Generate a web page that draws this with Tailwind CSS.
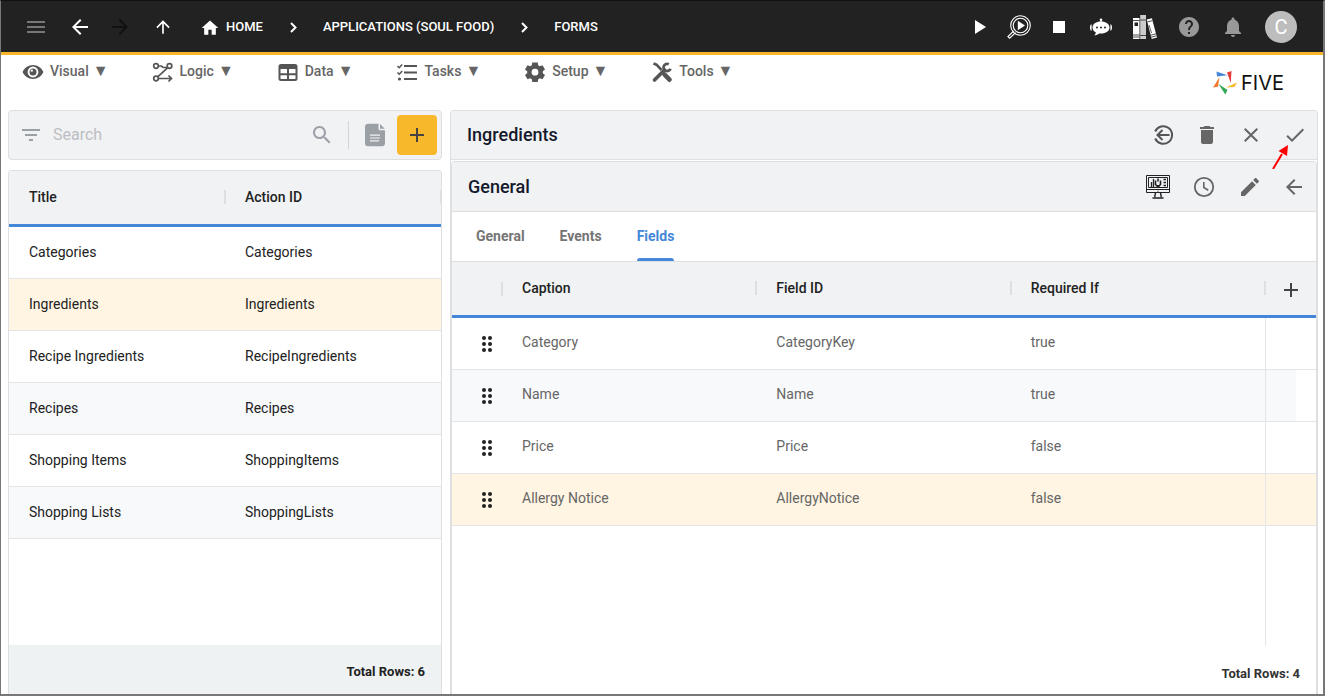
<!DOCTYPE html>
<html lang="en">
<head>
    <meta charset="UTF-8">
    <meta name="viewport" content="width=device-width, initial-scale=1.0">
    <script src="https://cdn.jsdelivr.net/npm/@tailwindcss/browser@4"></script>
    <title>Five - Forms</title>
</head>
<body class="h-screen flex flex-col overflow-hidden bg-white border-l border-t border-r-2 border-b-2 border-[#777] border-t-[#111] font-['Roboto',sans-serif] text-sm text-[#222]">

    <header class="h-[54px] shrink-0 flex items-center bg-[#222] border-b-3 border-[#fbb52b] text-white pl-[13px] pr-[26px]">
        <button aria-label="Menu" class="w-11 flex justify-center text-[#777]">
            <svg class="w-6 h-6" viewBox="0 0 24 24" fill="currentColor"><path d="M3 18h18v-2H3v2zm0-5h18v-2H3v2zm0-7v2h18V6H3z"/></svg>
        </button>
        <button aria-label="Back" class="w-11 flex justify-center">
            <svg class="w-6 h-6" viewBox="0 0 24 24" fill="currentColor"><path d="M20 11H7.83l5.59-5.59L12 4l-8 8 8 8 1.41-1.41L7.83 13H20v-2z"/></svg>
        </button>
        <button aria-label="Forward" class="w-9 flex justify-center text-[#111]">
            <svg class="w-6 h-6" viewBox="0 0 24 24" fill="currentColor"><path d="M12 4l-1.41 1.41L16.17 11H4v2h12.17l-5.58 5.59L12 20l8-8z"/></svg>
        </button>
        <button aria-label="Up" class="w-[50px] flex justify-center">
            <svg class="w-5 h-5" viewBox="0 0 24 24" fill="currentColor"><path d="M4 12l1.410 1.410L11 7.830V20h2V7.830l5.580 5.590L20 12l-8-8-8 8z"/></svg>
        </button>
        <nav class="flex items-center gap-[18px] ml-3 pt-0.5 text-[13px] font-medium">
            <a href="#" class="flex items-center gap-1.5">
                <svg class="w-5 h-5" viewBox="0 0 24 24" fill="currentColor"><path d="M10 20v-6h4v6h5v-8h3L12 3 2 12h3v8z"/></svg>
                HOME
            </a>
            <svg class="w-6 h-6" viewBox="0 0 24 24" fill="none" stroke="currentColor" stroke-width="2"><path d="M10 7l4.500 4.500-4.500 4.500"/></svg>
            <a href="#">APPLICATIONS (SOUL FOOD)</a>
            <svg class="w-6 h-6" viewBox="0 0 24 24" fill="none" stroke="currentColor" stroke-width="2"><path d="M10 7l4.500 4.500-4.500 4.500"/></svg>
            <a href="#">FORMS</a>
        </nav>

        <div class="flex items-center ml-auto">
            <button aria-label="Run" class="w-10 flex justify-center">
                <svg class="w-6 h-6" viewBox="0 0 24 24" fill="currentColor"><path d="M8 5v14l11-7z"/></svg>
            </button>
            <button aria-label="Inspect" class="w-10 flex justify-center">
                <svg class="w-6 h-6" viewBox="0 0 24 24" fill="none" stroke="currentColor">
                    <circle cx="13.500" cy="10.500" r="9.800" stroke-width="1.100"/>
                    <circle cx="13.500" cy="10.500" r="7.300" stroke-width="1.100"/>
                    <path d="M6.800 15.800L1 21.600l1.600 1.600 6-5.600" stroke-width="1.200"/>
                    <path d="M10.800 5.800v9.400l7.200-4.700z" fill="currentColor" stroke="none"/>
                </svg>
            </button>
            <button aria-label="Stop" class="w-10 flex justify-center">
                <svg class="w-6 h-6" viewBox="0 0 24 24" fill="currentColor"><path d="M6 6h12v12H6z"/></svg>
            </button>
            <button aria-label="Chat bot" class="w-11 flex justify-center">
                <svg class="w-6 h-6" viewBox="0 0 24 24" fill="currentColor">
                    <circle cx="12" cy="4.800" r="1.300"/>
                    <path d="M11.400 5h1.200v3h-1.200z"/>
                    <path d="M12 6.500c-5 0-8.500 2.500-8.500 6.100 0 2.200 1.300 3.900 3.400 5-.1 1-.7 1.900-1.600 2.700 2 0 3.700-.8 4.800-1.800.6.100 1.200.1 1.900.1 5 0 8.500-2.400 8.500-6s-3.500-6.100-8.500-6.100z"/>
                    <path d="M2.600 9.200v6.600C1.600 15.500 1 14.600 1 12.500s.6-3 1.600-3.300zM21.400 9.200v6.600c1-.3 1.600-1.200 1.600-3.300s-.6-3-1.600-3.300z"/>
                    <g fill="#222"><circle cx="8" cy="12.500" r="1"/><circle cx="12" cy="12.500" r="1"/><circle cx="16" cy="12.500" r="1"/></g>
                </svg>
            </button>
            <button aria-label="Library" class="w-11 flex justify-center">
                <svg class="w-6 h-6" viewBox="0 0 24 24">
                    <path fill="#fff" d="M0 3h6.500v21H0z"/>
                    <path fill="#ccc" d="M7.200 0H13v24H7.200z"/>
                    <path fill="#fff" d="M13.700 4.400l5.200-1.200L24 22.500 18.700 24z"/>
                    <g fill="none" stroke="#222">
                        <path d="M0 5.500h6.500M0 20h6.500M0 22h6.500M7.200 5h5.800M7.200 20.500h5.800M14.300 6.900l5.200-1.200M17.800 20.200l5.200-1.400M18.300 22.200l5.200-1.400" stroke-width=".8"/>
                        <path d="M16 10l2.600 8" stroke-width=".7"/>
                    </g>
                    <path fill="#222" d="M1.500 7.500h3.500v3.500H1.500z"/>
                </svg>
            </button>
            <button aria-label="Help" class="w-11 flex justify-center text-[#999]">
                <svg class="w-6 h-6" viewBox="0 0 24 24" fill="currentColor"><path d="M12 2C6.480 2 2 6.480 2 12s4.480 10 10 10 10-4.480 10-10S17.520 2 12 2zm1 17h-2v-2h2v2zm2.070-7.750l-.9.920C13.450 12.900 13 13.500 13 15h-2v-.5c0-1.100.450-2.100 1.170-2.830l1.240-1.260c.370-.360.590-.860.590-1.410 0-1.100-.9-2-2-2s-2 .9-2 2H8c0-2.210 1.790-4 4-4s4 1.790 4 4c0 .880-.360 1.680-.930 2.250z"/></svg>
            </button>
            <button aria-label="Notifications" class="w-11 flex justify-center text-[#999]">
                <svg class="w-6 h-6" viewBox="0 0 24 24" fill="currentColor"><path d="M12 22c1.100 0 2-.9 2-2h-4c0 1.100.890 2 2 2zm6-6v-5c0-3.070-1.640-5.640-4.500-6.320V4c0-.830-.670-1.500-1.500-1.500s-1.500.670-1.500 1.500v.680C7.630 5.360 6 7.920 6 11v5l-2 2v1h16v-1l-2-2z"/></svg>
            </button>
            <button aria-label="Account" class="w-8 h-8 ml-2.5 rounded-full bg-[#bdbdbd] text-xl leading-8">C</button>
        </div>
    </header>

    <div class="h-[55px] shrink-0 flex items-start justify-between pl-5 pr-[22px]">
        <nav class="flex gap-[42px] pt-[5px] font-medium text-[#666]">
            <button class="flex items-center gap-[5px]">
                <svg class="w-6 h-6" viewBox="0 0 24 24" fill="#555">
                    <path fill-rule="evenodd" d="M12 5C7.300 5 3.300 7.900 1.600 12c1.700 4.100 5.700 7 10.400 7s8.700-2.900 10.400-7C20.700 7.900 16.700 5 12 5zm0 12.400a5.400 5.400 0 110-10.800 5.400 5.400 0 010 10.800z"/>
                    <circle cx="12" cy="12" r="3.500"/>
                    <circle cx="10.800" cy="10.600" r="1.200" fill="#fff"/>
                </svg>
                <span class="flex items-center gap-1 h-5 mb-0.5">Visual <span class="text-base">▼</span></span>
            </button>
            <button class="flex items-center gap-[5px]">
                <svg class="w-6 h-6" viewBox="0 0 24 24" fill="none" stroke="#555" stroke-width="1.700">
                    <circle cx="5" cy="6" r="2.300"/>
                    <circle cx="18.500" cy="6" r="2.300"/>
                    <circle cx="5" cy="18.500" r="2.300"/>
                    <path d="M7.300 6h3l2 1.500M16.800 7.700L6.700 16.800M7.300 18.500h12.500M17.500 15.500l3 3-3 3M12.300 7.500h4"/>
                </svg>
                <span class="flex items-center gap-1 h-5 mb-0.5">Logic <span class="text-base">▼</span></span>
            </button>
            <button class="flex items-center gap-[5px]">
                <svg class="w-6 h-6" viewBox="0 0 24 24">
                    <rect x="3.500" y="5" width="17" height="15" rx="1.500" fill="none" stroke="#555" stroke-width="2"/>
                    <path d="M3 5h18v4H3z" fill="#555"/>
                    <path d="M12 8v12M3 14.200h18" stroke="#555" stroke-width="2"/>
                </svg>
                <span class="flex items-center gap-1 h-5 mb-0.5">Data <span class="text-base">▼</span></span>
            </button>
            <button class="flex items-center gap-[5px]">
                <svg class="w-6 h-6" viewBox="0 0 24 24" fill="none" stroke="#555" stroke-width="2">
                    <path d="M9 6h13M9 12.500h13M9 19h13"/>
                    <path d="M2.500 6l1.700 1.700L7.200 4.500M2.500 12.500l1.700 1.700L7.200 11" stroke-width="1.500"/>
                    <circle cx="4.500" cy="19" r="1.600" fill="#555" stroke="none"/>
                </svg>
                <span class="flex items-center gap-1 h-5 mb-0.5">Tasks <span class="text-base">▼</span></span>
            </button>
            <button class="flex items-center gap-[5px]">
                <svg class="w-6 h-6" viewBox="0 0 24 24" fill="#555">
                    <path fill-rule="evenodd" d="M9.300 2.500h5.400l.5 2.700 1.700 1 2.600-1 2.500 4.300-2.200 1.800v1.900l2.200 1.800-2.500 4.300-2.600-1-1.700 1-.5 2.700H9.300l-.5-2.700-1.700-1-2.600 1L2 15l2.200-1.800v-1.900L2 9.500l2.500-4.300 2.600 1 1.700-1zM12 8.800a3.400 3.400 0 100 6.800 3.400 3.400 0 000-6.800z"/>
                </svg>
                <span class="flex items-center gap-1 h-5 mb-0.5">Setup <span class="text-base">▼</span></span>
            </button>
            <button class="flex items-center gap-[5px]">
                <svg class="w-6 h-6" viewBox="0 0 24 24" fill="none" stroke="#555">
                    <path d="M4.500 20l10-10" stroke-width="3.600" stroke-linecap="round"/>
                    <path d="M18.800 4.200a3.600 3.600 0 10 1.700 4.600" stroke-width="2.800"/>
                    <path d="M3.500 3.500l3 1.200 5 5.300" stroke-width="2.600"/>
                    <path d="M14.500 14.500l5 5.200" stroke-width="4.600" stroke-linecap="round"/>
                </svg>
                <span class="flex items-center gap-1 h-5 mb-0.5">Tools <span class="text-base">▼</span></span>
            </button>
        </nav>
        <a href="#" class="flex items-center gap-1 mt-4 text-[#111] font-['Inter',sans-serif] text-xl leading-6">
            <svg class="w-6 h-6" viewBox="0 0 24 24">
                <path fill="#4487d8" d="M3.500.5l11 3.700L4 5.500z"/>
                <path fill="#e03c3c" d="M18.500 0l-4.500 1.500L17.800 12z"/>
                <path fill="#f7b92b" d="M24 11.500l-11 5L21.500 16z"/>
                <path fill="#34a853" d="M5.500 13l6.800 10.500 2.200-4.500z"/>
                <path fill="#f47b30" d="M6.500 6L0 16.500l5-.7z"/>
            </svg>
            <span class="w-[60px]">FIVE</span>
        </a>
    </div>

    <main class="flex-1 min-h-0 grid grid-cols-[1fr_2fr] gap-2 pl-[7px] pr-[5px]">

        <!-- list of forms -->
        <section class="flex flex-col min-h-0 gap-2.5">
            <div class="h-[50px] shrink-0 flex items-center border border-[#dedfe1] rounded bg-[#f1f2f4] pl-2.5 pr-1 text-[#9aa0a6]">
                <button aria-label="Filter">
                    <svg class="w-6 h-6" viewBox="0 0 24 24" fill="currentColor"><path d="M10 18h4v-2h-4v2zM3 6v2h18V6H3zm3 7h12v-2H6v2z"/></svg>
                </button>
                <input type="text" aria-label="Search" placeholder="Search" class="flex-1 min-w-0 ml-2.5 text-base text-[#222] placeholder:text-[#bcbec1] outline-none">
                <button aria-label="Run search" class="mr-3.5">
                    <svg class="w-6 h-6" viewBox="0 0 24 24" fill="currentColor"><path d="M15.500 14h-.790l-.280-.270C15.410 12.590 16 11.110 16 9.500 16 5.910 13.090 3 9.500 3S3 5.910 3 9.500 5.910 16 9.500 16c1.610 0 3.090-.590 4.230-1.570l.270.280v.790l5 4.990L20.490 19l-4.990-5zm-6 0C7.010 14 5 11.990 5 9.500S7.010 5 9.500 5 14 7.010 14 9.500 11.990 14 9.500 14z"/></svg>
                </button>
                <div class="w-px h-7 bg-[#d3d5d8] mr-1"></div>
                <button aria-label="Report" class="w-11 flex justify-center">
                    <svg class="w-6 h-6" viewBox="0 0 24 24" fill="currentColor">
                        <path d="M5 .8h10.500v5c0 .9.7 1.500 1.500 1.500h5v13.200c0 1.600-1.200 2.700-2.700 2.700H4.700c-1.500 0-2.700-1.200-2.700-2.700V3.500C2 2 3.500.8 5 .8zM17 1l4.800 4.800H17z"/>
                        <path d="M7 12.200h10M7 15h10M7 17.800h9" stroke="#f1f2f4" stroke-width="1.200"/>
                    </svg>
                </button>
                <button aria-label="Add form" class="w-10 h-10 rounded bg-[#f7b92b] flex items-center justify-center text-[#444]">
                    <svg class="w-6 h-6" viewBox="0 0 24 24" fill="currentColor"><path d="M19 13h-6v6h-2v-6H5v-2h6V5h2v6h6v2z"/></svg>
                </button>
            </div>

            <div class="flex-1 min-h-0 flex flex-col border border-b-0 border-[#dedfe1] rounded-t overflow-hidden">
                <table class="w-full table-fixed border-separate border-spacing-0 text-left">
                    <thead>
                        <tr class="bg-[#f1f2f4]">
                            <th class="h-14 p-0 pl-5 pb-0.5 border-b-3 border-[#4487d8] font-medium">
                                <div class="flex items-center justify-between">Title<span class="w-0.5 h-3.5 -mr-px bg-[#dedfe1]"></span></div>
                            </th>
                            <th class="h-14 p-0 pl-5 pb-0.5 border-b-3 border-[#4487d8] font-medium">
                                <div class="flex items-center justify-between">Action ID<span class="w-px h-3.5 bg-[#dedfe1]"></span></div>
                            </th>
                        </tr>
                    </thead>
                    <tbody id="form-list"></tbody>
                </table>
                <div class="mt-auto h-[49px] shrink-0 flex items-center justify-end bg-[#eef2f3] pt-1.5 pr-4 text-[13px] font-bold">Total Rows: 6</div>
            </div>
        </section>

        <!-- selected form -->
        <section class="relative flex flex-col min-h-0 border border-b-0 border-[#dedfe1] rounded-t">
            <div class="h-[49px] shrink-0 flex items-center justify-between border-b border-[#dedfe1] bg-[#f1f2f4] rounded-t pl-4 text-[#666]">
                <h1 class="text-lg font-medium text-[#14192b]">Ingredients</h1>
                <div class="flex">
                    <button aria-label="Revert" class="w-11 flex justify-center">
                        <svg class="w-6 h-6" viewBox="0 0 24 24" fill="none" stroke="#555" stroke-width="2"><path d="M4.200 8.500a8.800 8.800 0 1 1 0 7M18.500 12H6.500M11.500 7l-5 5 5 5"/></svg>
                    </button>
                    <button aria-label="Delete" class="w-11 flex justify-center">
                        <svg class="w-6 h-6" viewBox="0 0 24 24" fill="currentColor"><path d="M6 19c0 1.100.9 2 2 2h8c1.100 0 2-.9 2-2V7H6v12zM19 4h-3.500l-1-1h-5l-1 1H5v2h14V4z"/></svg>
                    </button>
                    <button aria-label="Cancel" class="w-11 flex justify-center">
                        <svg class="w-6 h-6" viewBox="0 0 24 24" fill="currentColor"><path d="M19 6.410L17.590 5 12 10.590 6.410 5 5 6.410 10.590 12 5 17.590 6.410 19 12 13.410 17.590 19 19 17.590 13.410 12z"/></svg>
                    </button>
                    <button aria-label="Save" class="w-11 flex justify-center">
                        <svg class="w-6 h-6" viewBox="0 0 24 24" fill="currentColor"><path d="M9 16.170L4.830 12l-1.420 1.410L9 19 21 7l-1.410-1.410z"/></svg>
                    </button>
                </div>
            </div>

            <div class="flex-1 min-h-0 flex flex-col mt-px border border-b-0 border-[#dedfe1] rounded-t">
                <div class="h-[50px] shrink-0 flex items-center justify-between border-b border-[#dedfe1] bg-[#f1f2f4] rounded-t pl-4 text-[#666]">
                    <h2 class="text-lg font-medium text-[#14192b]">General</h2>
                    <div class="flex">
                        <button aria-label="Preview" class="w-11 flex justify-center">
                            <svg class="w-6 h-6" viewBox="0 0 24 24" fill="none" stroke="#222">
                                <path d="M.5.500h23v17H.5zM.5 14.500h23M2.500 2.500h19v10h-19z"/>
                                <path d="M9.500 18l-.8 4M14.500 18l.8 4M6.500 23h11" stroke-width="1.400"/>
                                <path d="M5.500 12.500V7M7.500 12.500V4M17.500 4.500h2.500M17.500 7.500h2.500M17.500 10.500h2.500" stroke-width="1.300"/>
                                <path d="M9.500 5.500v4l2.500 2.500 2.500-2.500v-4M12 3.500v3M12 10v2.500" stroke-width="1.600"/>
                                <path d="M11.500 16.200h1"/>
                            </svg>
                        </button>
                        <button aria-label="History" class="w-12 flex justify-center">
                            <svg class="w-6 h-6" viewBox="0 0 24 24" fill="none" stroke="currentColor"><circle cx="12" cy="12" r="9.200" stroke-width="1.800"/><path d="M11.800 7v5.500l4.500 2.700" stroke-width="1.600"/></svg>
                        </button>
                        <button aria-label="Edit" class="w-11 flex justify-center">
                            <svg class="w-6 h-6" viewBox="0 0 24 24" fill="currentColor"><path d="M3 17.250V21h3.750L17.810 9.940l-3.750-3.750L3 17.250zM20.710 7.040c.390-.390.390-1.020 0-1.410l-2.340-2.340c-.390-.390-1.020-.390-1.410 0l-1.830 1.830 3.750 3.750 1.830-1.830z"/></svg>
                        </button>
                        <button aria-label="Back" class="w-11 flex justify-center">
                            <svg class="w-6 h-6" viewBox="0 0 24 24" fill="currentColor"><path d="M20 11H7.830l5.590-5.590L12 4l-8 8 8 8 1.410-1.410L7.830 13H20v-2z"/></svg>
                        </button>
                    </div>
                </div>

                <nav class="h-[50px] shrink-0 flex gap-[35px] border-b border-[#dedfe1] pl-6 font-bold text-[#757575]">
                    <button class="pb-0.5">General</button>
                    <button class="pb-0.5">Events</button>
                    <button class="relative pb-0.5 text-[#4487d8]">Fields<span class="absolute inset-x-0 bottom-0 h-[3px] rounded-t bg-[#4487d8]"></span></button>
                </nav>

                <table class="w-full table-fixed border-separate border-spacing-0 text-left">
                    <thead>
                        <tr class="bg-[#f1f2f4]">
                            <th class="w-[50px] h-14 p-0 border-b-3 border-[#4487d8]">
                                <div class="flex justify-end"><span class="w-0.5 h-3.5 -mr-px bg-[#dedfe1]"></span></div>
                            </th>
                            <th class="h-14 p-0 pl-5 pb-0.5 border-b-3 border-[#4487d8] font-medium">
                                <div class="flex items-center justify-between">Caption<span class="w-0.5 h-3.5 -mr-px bg-[#dedfe1]"></span></div>
                            </th>
                            <th class="h-14 p-0 pl-5 pb-0.5 border-b-3 border-[#4487d8] font-medium">
                                <div class="flex items-center justify-between">Field ID<span class="w-0.5 h-3.5 -mr-px bg-[#dedfe1]"></span></div>
                            </th>
                            <th class="h-14 p-0 pl-5 pb-0.5 border-b-3 border-[#4487d8] font-medium">
                                <div class="flex items-center justify-between">Required If<span class="w-0.5 h-3.5 -mr-px bg-[#dedfe1]"></span></div>
                            </th>
                            <th class="w-[51px] h-14 p-0 pt-0.5 border-b-3 border-[#4487d8]">
                                <button aria-label="Add field" class="flex mx-auto text-[#444]">
                                    <svg class="w-6 h-6" viewBox="0 0 24 24" fill="currentColor"><path d="M19 13h-6v6h-2v-6H5v-2h6V5h2v6h6v2z"/></svg>
                                </button>
                            </th>
                        </tr>
                    </thead>
                    <tbody id="field-list"></tbody>
                </table>
                <div class="flex-1 min-h-0 flex justify-end">
                    <div class="w-[51px] border-l border-[#e4e5e7]"></div>
                </div>
                <div class="h-12 shrink-0 flex items-center justify-end pt-2 pr-4 text-[13px] font-bold text-[#333]">Total Rows: 4</div>
            </div>

            <!-- pointer to the save button -->
            <svg class="absolute right-[29px] top-[34px] w-4 h-6 pointer-events-none" viewBox="0 0 16 24" fill="#f00"><path d="M1 24L10 9" stroke="#f00" stroke-width="2"/><path d="M16 0l-1 11-8.500-5z"/></svg>
        </section>
    </main>

    <script>
        let forms = [
            { title: "Categories", action: "Categories" },
            { title: "Ingredients", action: "Ingredients", selected: true },
            { title: "Recipe Ingredients", action: "RecipeIngredients" },
            { title: "Recipes", action: "Recipes" },
            { title: "Shopping Items", action: "ShoppingItems" },
            { title: "Shopping Lists", action: "ShoppingLists" }
        ];

        let fields = [
            { caption: "Category", id: "CategoryKey", required: "true" },
            { caption: "Name", id: "Name", required: "true" },
            { caption: "Price", id: "Price", required: "false" },
            { caption: "Allergy Notice", id: "AllergyNotice", required: "false", selected: true }
        ];

        function rowColor(row, index) {
            if (row.selected) return "bg-[#fff5e2]";
            return index % 2 ? "bg-[#f8f9fb]" : "bg-white";
        }

        document.getElementById("form-list").innerHTML = forms.map((form, index) => `
            <tr class="${rowColor(form, index)}">
                <td class="h-13 p-0 pl-5 pb-0.5 border-b border-[#e4e5e7]">${form.title}</td>
                <td class="h-13 p-0 pl-5 pb-0.5 border-b border-[#e4e5e7]">${form.action}</td>
            </tr>`).join("");

        document.getElementById("field-list").innerHTML = fields.map((field, index) => `
            <tr class="${rowColor(field, index)} text-[#666]">
                <td class="h-13 p-0 pl-[23px] border-b border-[#e4e5e7]">
                    <svg class="w-6 h-6" viewBox="0 0 24 24" fill="#222">
                        <circle cx="9" cy="6" r="2"/><circle cx="15" cy="6" r="2"/>
                        <circle cx="9" cy="12" r="2"/><circle cx="15" cy="12" r="2"/>
                        <circle cx="9" cy="18" r="2"/><circle cx="15" cy="18" r="2"/>
                    </svg>
                </td>
                <td class="h-13 p-0 pl-5 pb-1 border-b border-[#e4e5e7]">${field.caption}</td>
                <td class="h-13 p-0 pl-5 pb-1 border-b border-[#e4e5e7]">${field.id}</td>
                <td class="h-13 p-0 pl-5 pb-1 border-b border-[#e4e5e7]">${field.required}</td>
                <td class="h-13 p-0 border-b border-l border-[#e4e5e7]">
                    ${index % 2 && !field.selected ? '<div class="w-5 h-[51px] ml-auto bg-white"></div>' : ''}
                </td>
            </tr>`).join("");
    </script>
</body>
</html>
